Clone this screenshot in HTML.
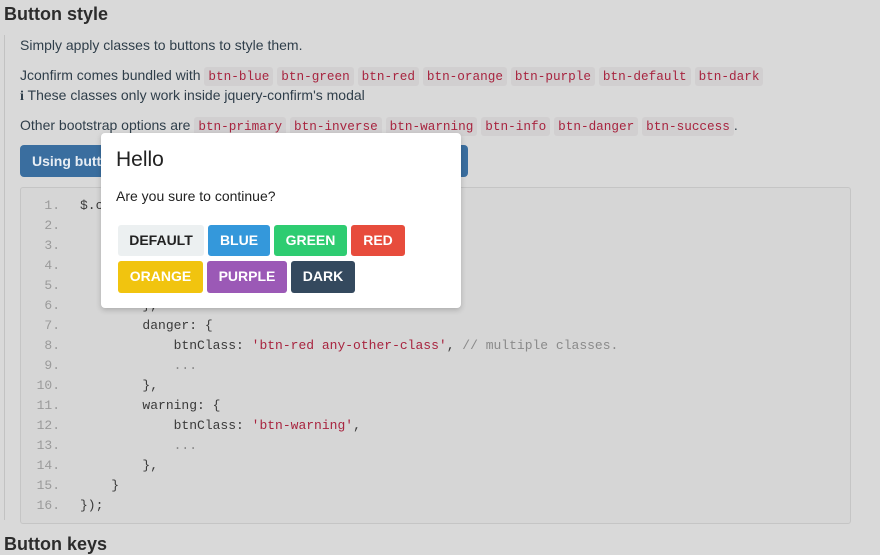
<!DOCTYPE html>
<html><head><meta charset="utf-8"><style>
body{margin:0;width:880px;height:544px;overflow:hidden;background:#d9d9d9;font-family:"Liberation Sans",sans-serif;color:#2a2a2a;position:relative}
.a{position:absolute;white-space:nowrap}
h2{position:absolute;left:4px;top:4px;margin:0;font-size:18px;font-weight:bold;color:#2c2c2c}
.p{font-size:14px;color:#2f3e4a}
code{font-family:"Liberation Mono",monospace;font-size:12.7px;color:#a8243f;background:#d1cfd0;border-radius:3px;padding:2px 4px}
.code{position:absolute;left:20px;top:187px;width:829px;height:335px;border:1px solid #c5c5c5;border-radius:3px;background:#d6d6d6}
.ln{position:absolute;left:20px;width:40px;text-align:right;font-family:"Liberation Mono",monospace;font-size:13px;color:#9a9a9a}
.cl{position:absolute;left:80px;font-family:"Liberation Mono",monospace;font-size:13px;color:#3a3a3a;white-space:pre}
.s{color:#a8243f}.c{color:#8a8a8a}
.modal{position:absolute;left:101px;top:133px;width:360px;height:175px;background:#fff;border-radius:4px;box-shadow:0 2px 6px rgba(0,0,0,.2)}
.b{position:absolute;height:31px;line-height:31px;text-align:center;font-weight:bold;font-size:14px;color:#fff;border-radius:3px}
</style></head><body>
<h2>Button style</h2>
<div class="a" style="left:4px;top:35px;width:1px;height:485px;background:#c2c2c2"></div>
<div class="a p" style="left:20px;top:37px">Simply apply classes to buttons to style them.</div>
<div class="a p" style="left:20px;top:67px">Jconfirm comes bundled with <code>btn-blue</code> <code>btn-green</code> <code>btn-red</code> <code>btn-orange</code> <code>btn-purple</code> <code>btn-default</code> <code>btn-dark</code></div>
<div class="a p" style="left:20px;top:87px"><b style="font-family:'Liberation Serif',serif">i</b> These classes only work inside jquery-confirm's modal</div>
<div class="a p" style="left:20px;top:117px">Other bootstrap options are <code>btn-primary</code> <code>btn-inverse</code> <code>btn-warning</code> <code>btn-info</code> <code>btn-danger</code> <code>btn-success</code>.</div>
<div class="a" style="left:20px;top:145px;width:448px;height:32px;background:#3a6e9f;border-radius:4px;color:#e8eef4;font-size:14px;font-weight:bold;line-height:32px;padding-left:12px;box-sizing:border-box">Using buttons</div>
<div class="code"></div>
<div class="ln" style="top:198px">1.</div><div class="cl" style="top:198px">$.confirm({</div>
<div class="ln" style="top:218px">2.</div><div class="cl" style="top:218px">    buttons: {</div>
<div class="ln" style="top:238px">3.</div><div class="cl" style="top:238px">        info: {</div>
<div class="ln" style="top:258px">4.</div><div class="cl" style="top:258px">            btnClass: <span class="s">'btn-blue'</span>,</div>
<div class="ln" style="top:278px">5.</div><div class="cl" style="top:278px">            ...</div>
<div class="ln" style="top:298px">6.</div><div class="cl" style="top:298px">        },</div>
<div class="ln" style="top:318px">7.</div><div class="cl" style="top:318px">        danger: {</div>
<div class="ln" style="top:338px">8.</div><div class="cl" style="top:338px">            btnClass: <span class="s">'btn-red any-other-class'</span>, <span class="c">// multiple classes.</span></div>
<div class="ln" style="top:358px">9.</div><div class="cl" style="top:358px"><span class="c">            ...</span></div>
<div class="ln" style="top:378px">10.</div><div class="cl" style="top:378px">        },</div>
<div class="ln" style="top:398px">11.</div><div class="cl" style="top:398px">        warning: {</div>
<div class="ln" style="top:418px">12.</div><div class="cl" style="top:418px">            btnClass: <span class="s">'btn-warning'</span>,</div>
<div class="ln" style="top:438px">13.</div><div class="cl" style="top:438px"><span class="c">            ...</span></div>
<div class="ln" style="top:458px">14.</div><div class="cl" style="top:458px">        },</div>
<div class="ln" style="top:478px">15.</div><div class="cl" style="top:478px">    }</div>
<div class="ln" style="top:498px">16.</div><div class="cl" style="top:498px">});</div>
<div class="a" style="left:4px;top:534px;font-size:18px;font-weight:bold;color:#2c2c2c">Button keys</div>
<div class="modal">
<div class="a" style="left:15px;top:15px;font-size:21px;color:#222">Hello</div>
<div class="a" style="left:15px;top:55px;font-size:14px;color:#222">Are you sure to continue?</div>
<div class="b" style="left:17px;top:92px;width:86px;background:#ecf0f1;color:#222">DEFAULT</div>
<div class="b" style="left:107px;top:92px;width:62px;background:#3498db">BLUE</div>
<div class="b" style="left:173px;top:92px;width:73px;background:#2ecc71">GREEN</div>
<div class="b" style="left:250px;top:92px;width:54px;background:#e74c3c">RED</div>
<div class="b" style="left:17px;top:128px;width:85px;height:32px;background:#f1c40f">ORANGE</div>
<div class="b" style="left:106px;top:128px;width:80px;height:32px;background:#9b59b6">PURPLE</div>
<div class="b" style="left:190px;top:128px;width:64px;height:32px;background:#34495e">DARK</div>
</div>
</body></html>
